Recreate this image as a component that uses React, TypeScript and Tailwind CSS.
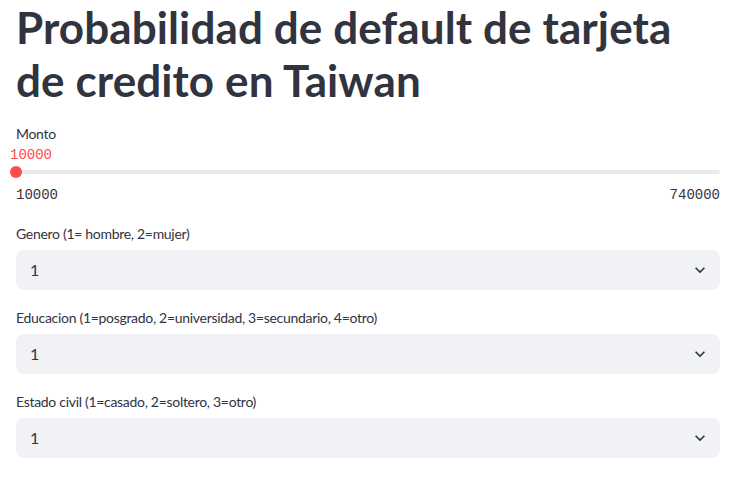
import React from 'react';

const sans = { fontFamily: '"Source Sans Pro", Lato, "Noto Sans", sans-serif' };

const Chevron = () => (
  <svg width="20" height="20" viewBox="0 0 24 24" className="text-[#31333f]">
    <path d="M7.4 8.6 12 13.2l4.6-4.6L18 10l-6 6-6-6z" fill="currentColor" />
  </svg>
);

const SelectBox = ({ label, value }: { label: string; value: string }) => (
  <div className="flex flex-col">
    <label className="text-[14px] leading-[20px] tracking-[-0.3px] text-[#31333f] h-[20px]">{label}</label>
    <div className="mt-[6px] h-[40px] bg-[#f0f2f6] rounded-[8px] flex items-center justify-between pl-[14px] pr-[10px]">
      <span className="text-[16px] text-[#31333f]">{value}</span>
      <Chevron />
    </div>
  </div>
);

const App = () => {
  return (
    <div className="min-h-screen bg-white px-[16px] w-[736px] antialiased" style={sans}>
      {/* Title */}
      <h1 className="pt-[1px] text-[44px] leading-[52.8px] font-bold text-[#31333f] tracking-[0.1px]">
        Probabilidad de default de tarjeta de credito en Taiwan
      </h1>

      {/* Slider */}
      <div className="mt-[17px]">
        <label className="block text-[14px] leading-[20px] tracking-[-0.3px] text-[#31333f]">Monto</label>
        <div className="relative h-[41px]">
          <span className="absolute left-[-6px] top-[1px] leading-[20px] font-['Liberation_Mono',monospace] text-[14px] text-[#ff4b4b]">
            10000
          </span>
          <div className="absolute left-0 right-0 top-[26px] h-[4px] rounded bg-[#e6eaf1]" />
          <div className="absolute left-[-6px] top-[22px] w-[12px] h-[12px] rounded-full bg-[#ff4b4b]" />
        </div>
        <div className="flex justify-between font-['Liberation_Mono',monospace] text-[14px] leading-[20px] text-[#31333f]">
          <span>10000</span>
          <span>740000</span>
        </div>
      </div>

      {/* Selects */}
      <div className="mt-[19px] flex flex-col gap-[18px]">
        <SelectBox label="Genero (1= hombre, 2=mujer)" value="1" />
        <SelectBox label="Educacion (1=posgrado, 2=universidad, 3=secundario, 4=otro)" value="1" />
        <SelectBox label="Estado civil (1=casado, 2=soltero, 3=otro)" value="1" />
      </div>
    </div>
  );
};

export default App;
